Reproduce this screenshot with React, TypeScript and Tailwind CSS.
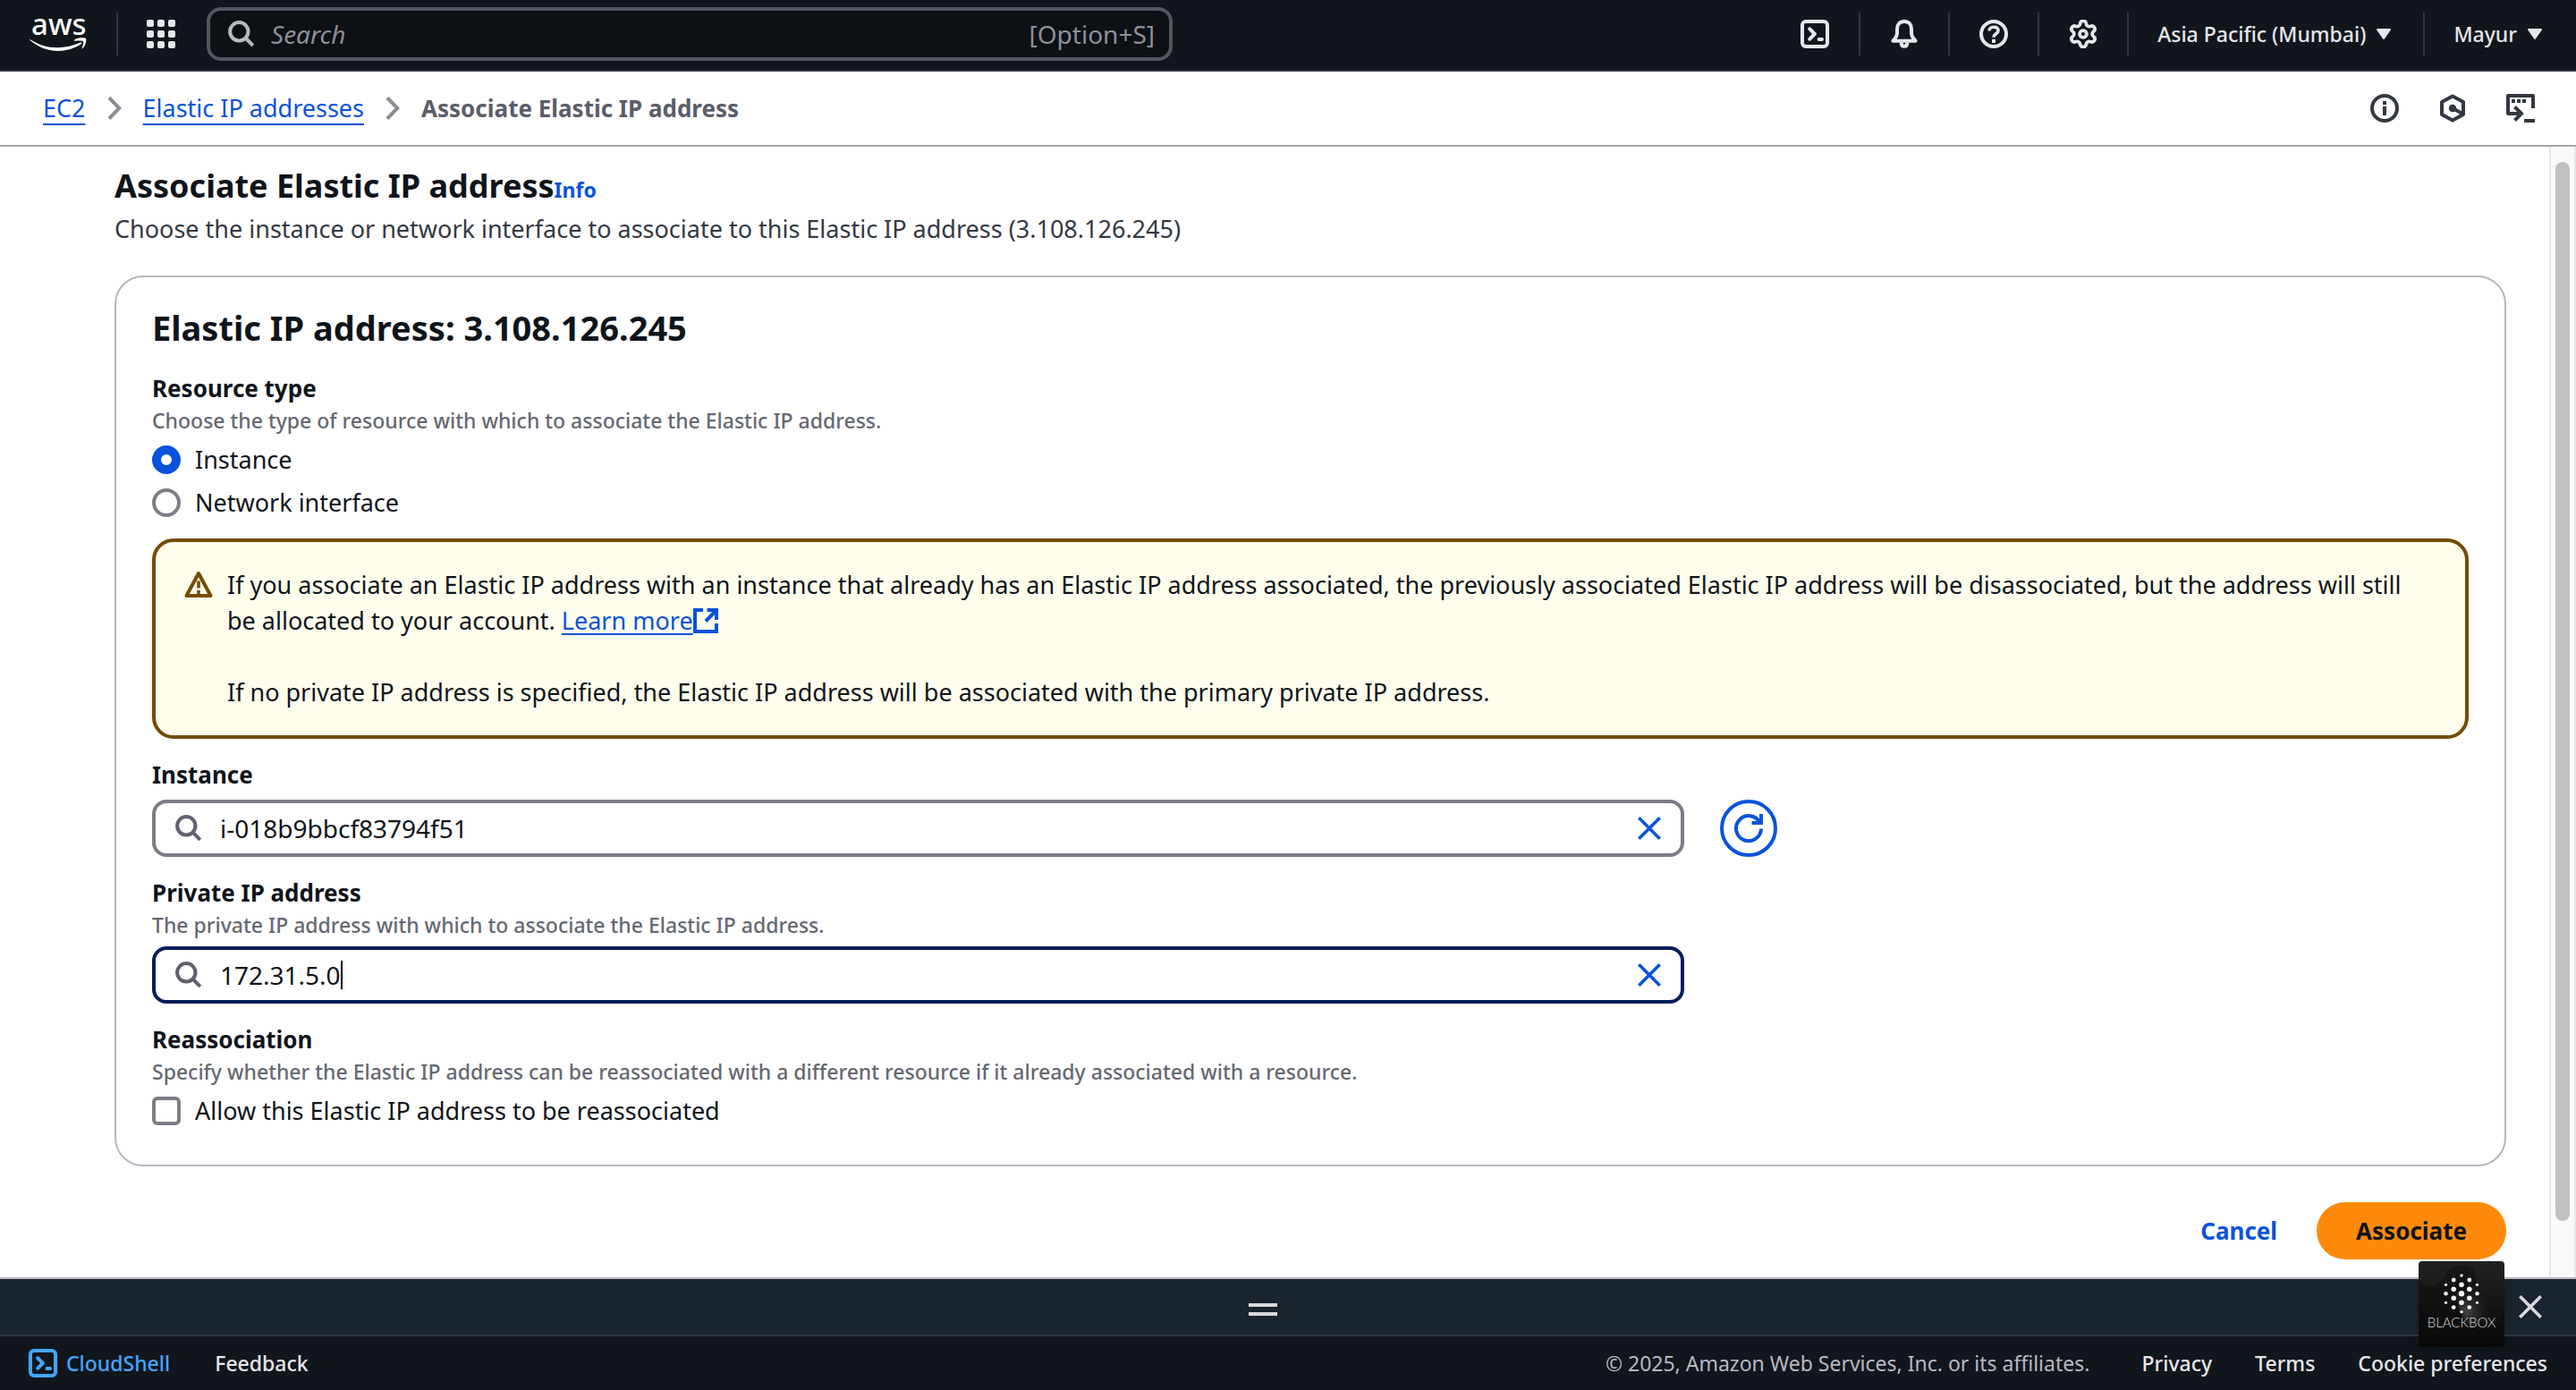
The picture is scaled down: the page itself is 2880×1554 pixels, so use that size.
import type { ReactNode } from "react";

type IconProps = { className?: string };

function Stroke({ className = "", size = "size-8", box = "0 0 32 32", width = 4, round = false, children }: IconProps & { size?: string; box?: string; width?: number; round?: boolean; children: ReactNode }) {
  return (
    <svg
      viewBox={box}
      className={`${size} shrink-0 ${className}`}
      fill="none"
      stroke="currentColor"
      strokeWidth={width}
      strokeLinejoin={round ? "round" : "miter"}
      strokeLinecap={round ? "round" : "butt"}
      aria-hidden="true"
    >
      {children}
    </svg>
  );
}

const SearchIcon = ({ className }: IconProps) => (
  <Stroke size="size-[30px]" box="0 0 30 30" className={className}>
    <circle cx="12.3" cy="12.3" r="10.2" />
    <path d="M19 19 27.8 27.8" />
  </Stroke>
);

const TerminalIcon = ({ className }: IconProps) => (
  <Stroke round className={className}>
    <rect x="2" y="2" width="28" height="28" rx="4" />
    <path d="M10.3 10.3 15.8 16l-5.5 5.7M20.6 22h3.4" />
  </Stroke>
);

const BellIcon = () => (
  <Stroke round>
    <path d="M16 2c-5.2 0-8 3.6-8 8.4V15c0 3.600-2 6-4.600 8.700h25.200C26 21 24 18.600 24 15v-4.600C24 5.600 21.200 2 16 2z" />
    <path d="M12.600 25.500c0 2.800 1.400 4.300 3.400 4.300s3.400-1.500 3.400-4.300" strokeLinecap="butt" />
  </Stroke>
);

const HelpIcon = () => (
  <Stroke>
    <circle cx="16" cy="16" r="14" />
    <path d="M11 12.400C11 9.900 13 8.300 16 8.300s5 1.500 5 4c0 3.600-5 3.400-5 7.400" strokeWidth="3.600" />
    <path d="M14 21.800h4V26h-4z" fill="currentColor" stroke="none" />
  </Stroke>
);

const GearIcon = () => (
  <Stroke round box="1 1 22 22" width={2.6}>
    <path d="M9.671 4.136a2.340 2.340 0 0 1 4.659 0 2.340 2.340 0 0 0 3.319 1.915 2.340 2.340 0 0 1 2.330 4.033 2.340 2.340 0 0 0 0 3.831 2.340 2.340 0 0 1-2.330 4.033 2.340 2.340 0 0 0-3.319 1.915 2.340 2.340 0 0 1-4.659 0 2.340 2.340 0 0 0-3.320-1.915 2.340 2.340 0 0 1-2.330-4.033 2.340 2.340 0 0 0 0-3.831A2.340 2.340 0 0 1 6.350 6.051a2.340 2.340 0 0 0 3.319-1.915" />
    <circle cx="12" cy="12" r="2.700" />
  </Stroke>
);

const InfoIcon = () => (
  <Stroke>
    <circle cx="16" cy="16" r="14" />
    <path d="M16 8v4M16 14v10" />
  </Stroke>
);

const HexagonIcon = () => (
  <Stroke>
    <path d="M16 2.600 28 9v14l-12 6.400L4 23V9z" strokeLinejoin="round" />
    <circle cx="16" cy="16" r="4.200" fill="currentColor" stroke="none" />
    <path d="M16 16l12 6.500" />
  </Stroke>
);

const ShellActionsIcon = () => (
  <Stroke>
    <path d="M30 16V2H2v20h14" strokeLinejoin="round" />
    <path d="M6 8h4M12 8h4M18 8h4" />
    <path d="M9.500 14.500 17 22l-7.500 7.500M20 30h12" />
  </Stroke>
);

const WarningIcon = () => (
  <Stroke round className="mt-1 text-[#754b00]">
    <path d="M16 3 29.500 28H2.500z" />
    <path d="M16 11.500v8M16 22v4" strokeLinecap="butt" strokeWidth="3.600" />
  </Stroke>
);

const CrossIcon = () => (
  <Stroke size="size-[26px]" box="0 0 26 26" width={3.6}>
    <path d="M1.300 1.300 24.700 24.700M24.700 1.300 1.300 24.700" />
  </Stroke>
);

const ChevronIcon = () => (
  <Stroke size="h-[26px] w-4" box="0 0 16 26" width={4} className="text-[#8c8c94]">
    <path d="M2 1.300 13.300 13 2 24.700" />
  </Stroke>
);

const CaretIcon = () => (
  <svg viewBox="0 0 16 12" className="h-3 w-4" fill="currentColor" aria-hidden="true">
    <path d="M1 0h14a1 1 0 0 1 .8 1.600L9 11.300a1.200 1.200 0 0 1-2 0L.2 1.600A1 1 0 0 1 1 0z" />
  </svg>
);

function AwsLogo() {
  return (
    <svg viewBox="0 -14 66 72" className="h-18 w-[66px]" fill="white" role="img" aria-label="aws">
      <text x="3" y="22.500" fontSize="33" fontWeight="500" fontFamily="'Noto Sans', sans-serif">aws</text>
      <path d="M2 28.200C11 34 21 37.200 32 37.200c9 0 18-2.200 26-5.700 1.200-.5 2 .8 1 1.600C51.500 38.400 42 41 33 41 20.500 41 9.800 36 1.600 29c-.6-.5-.2-1.200.4-.8z" />
      <path d="M51.500 28.200c3.600-2.400 11.800-2.300 12.600-1 .8 1.300-.4 7.800-3.600 10.800-.6.500-1.200.2-.9-.5.900-2.100 2.200-6.100 1.500-7.100-.8-1-5.800-.9-9.300-.6-.8 0-1-.9-.3-1.600z" />
    </svg>
  );
}

const blackboxDots: [number, number, number][] = [
  [30.500, 26.300, 1.600], [30.500, 36.300, 2.300], [30.500, 46.300, 1.600],
  [39.200, 21, 2.400], [39.200, 31.300, 2.800], [39.200, 41.300, 2.800], [39.200, 51.600, 2.400],
  [48, 16, 1.700], [48, 26.300, 2.800], [48, 36.300, 3.200], [48, 46.300, 2.800], [48, 56.600, 1.700],
  [56.800, 21, 2.400], [56.800, 31.300, 2.800], [56.800, 41.300, 2.800], [56.800, 51.600, 2.400],
  [65.500, 26.300, 1.600], [65.500, 36.300, 2.300], [65.500, 46.300, 1.600],
];

function BlackboxBadge() {
  return (
    <svg viewBox="0 0 96 96" className="absolute -top-5 right-20 size-24 rounded shadow-lg" role="img" aria-label="BLACKBOX">
      <defs>
        <linearGradient id="bb-base" x1="0" y1="0" x2="0" y2="1">
          <stop offset="0" stopColor="#222222" />
          <stop offset="0.5" stopColor="#161616" />
          <stop offset="1" stopColor="#060606" />
        </linearGradient>
        <radialGradient id="bb-glow" gradientUnits="userSpaceOnUse" cx="54" cy="57" r="26">
          <stop offset="0" stopColor="#6a6a6a" stopOpacity="0.6" />
          <stop offset="1" stopColor="#222222" stopOpacity="0" />
        </radialGradient>
      </defs>
      <rect width="96" height="96" fill="url(#bb-base)" />
      <path d="M32 10C44 2 62 2 64 16s-10 20-20 18 0 30 34 46c10-8 14-20 18-24V96H0V20c14 18 30 2 32-10z" fill="#0b0b0b" opacity="0.45" />
      <path d="M42 38c2 22 14 38 38 42l14-14V36z" fill="url(#bb-glow)" />
      {blackboxDots.map(([x, y, r]) => (
        <circle key={`${x}-${y}`} cx={x} cy={y} r={r} fill="#f4f4f4" />
      ))}
      <text x="48" y="74" textAnchor="middle" fontSize="15" fontWeight="300" fontFamily="Lato, sans-serif" fill="#d8d8d8">BLACKBOX</text>
    </svg>
  );
}

const Divider = () => <span className="h-12 w-0.5 shrink-0 bg-[#33363f]" />;

function HeaderIcon({ label, children }: { label: string; children: ReactNode }) {
  return (
    <>
      <button type="button" aria-label={label} className="flex h-12 w-[98px] items-center justify-center">{children}</button>
      <Divider />
    </>
  );
}

function Header() {
  return (
    <header className="flex h-20 items-center border-b-2 border-[#33363f] bg-[#11161d] pb-0.5 pl-8 text-[#e6e6ec]">
      <a href="#home" className="mr-8"><AwsLogo /></a>
      <Divider />
      <button type="button" aria-label="Services" className="mr-[35px] ml-8 grid grid-cols-3 gap-1">
        {Array.from({ length: 9 }, (_, i) => <span key={i} className="size-2 rounded-xs bg-[#e6e6ec]" />)}
      </button>
      <label className="flex h-15 w-[1080px] items-center gap-[18px] rounded-2xl border-4 border-[#535661] bg-[#0d1015] pr-4 pl-5 text-[28px] text-[#8f8f99]">
        <SearchIcon className="text-[#b8b8c0]" />
        <input aria-label="Search" placeholder="Search" className="min-w-0 flex-1 bg-transparent italic outline-none placeholder:text-[#8f8f99]" />
        <span>[Option+S]</span>
      </label>
      <nav className="ml-auto flex items-center text-[23px] font-medium">
        <HeaderIcon label="CloudShell"><TerminalIcon /></HeaderIcon>
        <HeaderIcon label="Notifications"><BellIcon /></HeaderIcon>
        <HeaderIcon label="Help"><HelpIcon /></HeaderIcon>
        <HeaderIcon label="Settings"><GearIcon /></HeaderIcon>
        <button type="button" className="flex items-center gap-3 pr-9 pl-8">Asia Pacific (Mumbai)<CaretIcon /></button>
        <Divider />
        <button type="button" className="flex items-center gap-3 pr-[38px] pl-8">Mayur<CaretIcon /></button>
      </nav>
    </header>
  );
}

function Breadcrumbs() {
  const link = "text-[#0952db] underline decoration-2 underline-offset-[7px]";
  return (
    <div className="flex items-center justify-between border-b-2 border-[#a4a4ad] bg-white py-[21px] pr-[46px] pl-12">
      <nav aria-label="Breadcrumbs" className="flex items-center gap-6 text-[27px] leading-10">
        <a href="#ec2" className={link}>EC2</a>
        <ChevronIcon />
        <a href="#addresses" className={link}>Elastic IP addresses</a>
        <ChevronIcon />
        <span className="text-[26px] font-bold text-[#5a5d68]">Associate Elastic IP address</span>
      </nav>
      <div className="flex items-center gap-11 text-[#333843]">
        <button type="button" aria-label="Info"><InfoIcon /></button>
        <button type="button" aria-label="Diagnostics"><HexagonIcon /></button>
        <button type="button" aria-label="Shell actions"><ShellActionsIcon /></button>
      </div>
    </div>
  );
}

const labelClass = "block text-[26px] leading-10 font-bold";
const hintClass = "text-[23px] leading-8 font-medium text-[#656871]";

function Choice({ type, name, label, checked }: { type: "radio" | "checkbox"; name: string; label: string; checked?: boolean }) {
  return (
    <label className="mt-2 flex items-center gap-4 text-[27px] leading-10">
      <input
        type={type}
        name={name}
        defaultChecked={checked}
        className={
          type === "radio"
            ? "size-8 appearance-none rounded-full border-4 border-[#7d7d87] bg-white checked:border-10 checked:border-[#0952db]"
            : "size-8 appearance-none rounded-md border-4 border-[#7d7d87] bg-white checked:bg-[#0952db]"
        }
      />
      {label}
    </label>
  );
}

function SearchField({ id, value, active }: { id: string; value: string; active?: boolean }) {
  return (
    <div
      className={`mt-2 flex h-16 flex-1 items-center rounded-2xl border-4 bg-white px-[22px] text-[28px] ${active ? "border-[#001e57]" : "border-[#7d7d87]"}`}
    >
      <SearchIcon className="mr-5 text-[#5f626d]" />
      <input id={id} defaultValue={value} className="field-sizing-content outline-none" />
      {active && <span className="h-8 w-0.5 bg-black" />}
      <button type="button" aria-label="Clear" className="ml-auto text-[#0952db]"><CrossIcon /></button>
    </div>
  );
}

function Content() {
  return (
    <main className="min-w-0 flex-1 pt-5 pr-12 pb-5 pl-32">
      <div className="flex items-baseline">
        <h1 className="text-[36px] leading-12 font-bold">Associate Elastic IP address</h1>
        <a href="#info" className="text-[23px] font-bold text-[#0952db]">Info</a>
      </div>
      <p className="mt-1 text-[27px] leading-10 text-[#333843]">
        Choose the instance or network interface to associate to this Elastic IP address (3.108.126.245)
      </p>

      <section className="mt-8 rounded-[32px] border-2 border-[#b6b6c0] px-10 pt-8 pb-10">
        <h2 className="text-[38px] leading-12 font-bold">Elastic IP address: 3.108.126.245</h2>

        <fieldset className="mt-6">
          <legend className={labelClass}>Resource type</legend>
          <p className={hintClass}>Choose the type of resource with which to associate the Elastic IP address.</p>
          <Choice type="radio" name="resource" label="Instance" checked />
          <Choice type="radio" name="resource" label="Network interface" />
        </fieldset>

        <div role="alert" className="mt-5 flex gap-4 rounded-3xl border-4 border-[#754b00] bg-[#fffeec] px-8 py-7 pr-9 text-[27px] leading-10">
          <WarningIcon />
          <div>
            <p>
              If you associate an Elastic IP address with an instance that already has an Elastic IP address associated, the previously associated Elastic IP address will be disassociated, but the address will still be allocated to your account.{" "}
              <a href="#learn" className="whitespace-nowrap text-[#0952db] underline decoration-2 underline-offset-4">
                Learn more
                <svg viewBox="0 0 28 28" className="inline size-7 align-[-4px]" fill="none" stroke="currentColor" strokeWidth="4" aria-hidden="true">
                  <path d="M11 2H2v24h24v-9M15.500 2H26v11M26 2 14 14.500" />
                </svg>
              </a>
            </p>
            <p className="mt-10">If no private IP address is specified, the Elastic IP address will be associated with the primary private IP address.</p>
          </div>
        </div>

        <div className="mt-5">
          <label htmlFor="instance" className={labelClass}>Instance</label>
          <div className="flex w-[70.15%] items-end gap-10">
            <SearchField id="instance" value="i-018b9bbcf83794f51" />
            <button type="button" aria-label="Refresh" className="flex size-16 items-center justify-center rounded-full border-4 border-[#0952db] text-[#0952db]">
              <Stroke>
                <path d="M28.600 10A14 14 0 1 0 30 16.500" />
                <path d="M30 0v10H19.500" />
              </Stroke>
            </button>
          </div>
        </div>

        <div className="mt-5">
          <label htmlFor="private-ip" className={labelClass}>Private IP address</label>
          <p className={hintClass}>The private IP address with which to associate the Elastic IP address.</p>
          <div className="flex w-[70.15%] pr-26">
            <SearchField id="private-ip" value="172.31.5.0" active />
          </div>
        </div>

        <fieldset className="mt-5">
          <legend className={labelClass}>Reassociation</legend>
          <p className={hintClass}>
            Specify whether the Elastic IP address can be reassociated with a different resource if it already associated with a resource.
          </p>
          <Choice type="checkbox" name="reassociate" label="Allow this Elastic IP address to be reassociated" />
        </fieldset>
      </section>

      <div className="mt-10 flex h-16 items-center justify-end text-[26px] font-bold">
        <button type="button" className="px-11 text-[#0952db]">Cancel</button>
        <button type="button" className="h-16 rounded-full bg-[#ff8a0a] px-11 text-[#0f141a]">Associate</button>
      </div>
    </main>
  );
}

function Footer() {
  return (
    <footer className="flex min-h-15 items-center bg-[#11161d] px-8 text-[23px] leading-8 font-medium text-[#e6e6ec]">
      <a href="#cloudshell" className="mr-[50px] flex items-center gap-2.5 text-[#42a6ff]"><TerminalIcon />CloudShell</a>
      <a href="#feedback">Feedback</a>
      <div className="ml-auto flex items-center gap-12">
        <span className="mr-2.5 font-normal text-[#b8b8c2]">© 2025, Amazon Web Services, Inc. or its affiliates.</span>
        <a href="#privacy">Privacy</a>
        <a href="#terms">Terms</a>
        <button type="button">Cookie preferences</button>
      </div>
    </footer>
  );
}

export default function App() {
  return (
    <div className="flex min-h-screen flex-col bg-white font-['Noto_Sans',sans-serif] text-[#0f141a]">
      <Header />
      <Breadcrumbs />
      <div className="flex flex-1">
        <Content />
        <div className="flex w-[30px] shrink-0 justify-center border-x-2 border-[#e8e8e8] bg-[#fafafa] pt-[17px] pb-[63px]">
          <span className="w-4 rounded-full bg-[#c1c1c1]" />
        </div>
      </div>
      <div className="relative flex h-[66px] items-center border-y-2 border-t-[#b6b6c0] border-b-[#33363f] bg-[#1a242f] pr-[38px] pl-2 text-[#d8d8de]">
        <button type="button" aria-label="Resize panel" className="flex flex-1 flex-col items-center gap-1.5 pt-1.5">
          <span className="h-1 w-8 bg-[#d8d8de]" />
          <span className="h-1 w-8 bg-[#d8d8de]" />
        </button>
        <button type="button" aria-label="Close panel"><CrossIcon /></button>
        <BlackboxBadge />
      </div>
      <Footer />
    </div>
  );
}
